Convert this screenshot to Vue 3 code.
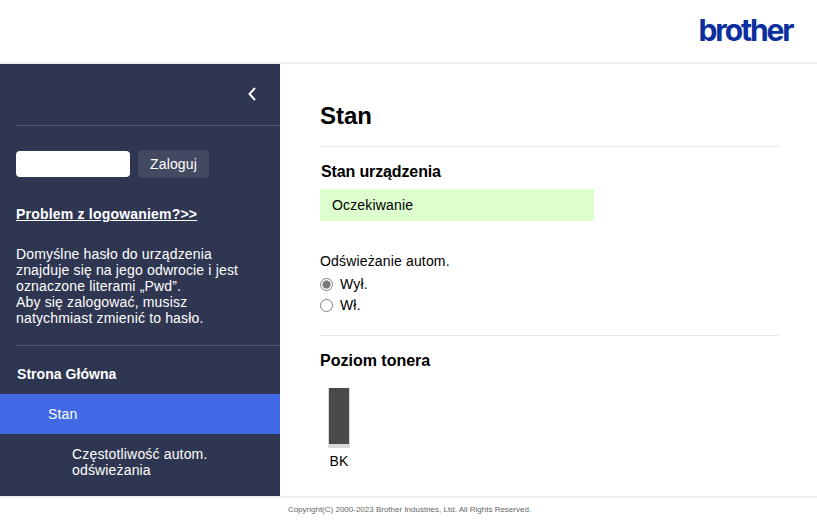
<script setup>
const help = [
  'Domyślne hasło do urządzenia',
  'znajduje się na jego odwrocie i jest',
  'oznaczone literami „Pwd”.',
  'Aby się zalogować, musisz',
  'natychmiast zmienić to hasło.'
]
</script>

<template>
  <div class="page">
    <header class="top">
      <svg class="logo" width="97" height="26" viewBox="0 0 97 26" role="img" aria-label="brother">
        <text x="0.5" y="24" textLength="96" lengthAdjust="spacing">brother</text>
      </svg>
    </header>
    <div class="middle">
      <aside class="side">
        <div class="collapse">
          <svg width="10" height="16" viewBox="0 0 10 16">
            <path d="M8 2 L2.5 8 L8 14" fill="none" stroke="#fff" stroke-width="2" />
          </svg>
        </div>
        <div class="login">
          <input class="pw" type="password" />
          <button class="btn" type="button">Zaloguj</button>
        </div>
        <a class="problem">Problem z logowaniem?&gt;&gt;</a>
        <p class="help"><span v-for="l in help" :key="l">{{ l }}<br /></span></p>
        <nav class="nav">
          <div class="nav-home">Strona Główna</div>
          <div class="nav-active">Stan</div>
          <div class="nav-sub">Częstotliwość autom.<br />odświeżania</div>
        </nav>
      </aside>
      <main class="main">
        <h1 class="title">Stan</h1>
        <h2 class="h-device">Stan urządzenia</h2>
        <div class="status">Oczekiwanie</div>
        <div class="refresh">Odświeżanie autom.</div>
        <label class="radio"><input type="radio" name="r" checked /><span>Wył.</span></label>
        <label class="radio"><input type="radio" name="r" /><span>Wł.</span></label>
        <h2 class="h-toner">Poziom tonera</h2>
        <div class="toner">
          <div class="bar"><div class="fill"></div></div>
          <div class="bk">BK</div>
        </div>
      </main>
    </div>
    <footer class="foot">Copyright(C) 2000-2023 Brother Industries, Ltd. All Rights Reserved.</footer>
  </div>
</template>

<style>
html, body { margin: 0; padding: 0; background: #fff; overflow: hidden; }
</style>

<style scoped>
.page {
  width: 817px;
  height: 521px;
  display: flex;
  flex-direction: column;
  font-family: "Liberation Sans", Arial, sans-serif;
  font-size: 14px;
  letter-spacing: 0.16px;
  color: #000;
  overflow: hidden;
}
.top {
  flex: none;
  border-bottom: 2px solid #eee;
  display: flex;
  justify-content: flex-end;
  align-items: flex-start;
  padding: 17px 22px 0 0;
  height: 45px;
}
.logo { overflow: visible; }
.logo text {
  font-family: Inter, "Liberation Sans", sans-serif;
  font-weight: 700;
  font-size: 30px;
  letter-spacing: 0;
  fill: #0b2f9f;
}
.middle { flex: 1; min-height: 0; display: flex; }
.side {
  width: 280px;
  flex: none;
  background: #2f3651;
  color: #fff;
  overflow: hidden;
}
.collapse {
  height: 62px;
  margin-left: 16px;
  border-bottom: 1px solid #4f5569;
  display: flex;
  align-items: flex-start;
  justify-content: flex-end;
  padding: 22px 23px 0 0;
  box-sizing: border-box;
}
.login {
  display: flex;
  align-items: center;
  gap: 8px;
  padding: 24px 0 0 16px;
}
.pw {
  width: 114px;
  height: 26px;
  box-sizing: border-box;
  border: 0;
  border-radius: 4px;
  background: #fff;
  padding: 0;
}
.btn {
  width: 71px;
  height: 28px;
  border: 0;
  border-radius: 4px;
  background: #434961;
  color: #fff;
  font: 14px "Liberation Sans", Arial, sans-serif;
  letter-spacing: 0.16px;
  padding: 0;
}
.problem {
  display: block;
  margin: 28px 0 0 16px;
  font-weight: 700;
  font-size: 14px;
  line-height: 16px;
  letter-spacing: 0.2px;
  color: #fff;
  text-decoration: underline;
}
.help {
  margin: 24px 0 0 16px;
  font-size: 14px;
  line-height: 16px;
  padding-bottom: 19px;
}
.nav-home {
  margin-left: 16px;
  border-top: 1px solid #4f5569;
  padding: 20px 0 0 1px;
  height: 28px;
  line-height: 16px;
  font-weight: 700;
  letter-spacing: 0.05px;
}
.nav-active {
  height: 40px;
  line-height: 40px;
  background: #4169e6;
  padding-left: 48px;
}
.nav-sub {
  padding: 12px 0 0 72px;
  line-height: 16px;
}
.main {
  flex: 1;
  min-width: 0;
  padding: 0 38px 0 40px;
  overflow: hidden;
}
.title {
  margin: 0;
  height: 83px;
  box-sizing: border-box;
  padding-top: 37px;
  font-size: 24px;
  line-height: 30px;
  font-weight: 700;
  letter-spacing: 0;
  border-bottom: 1px solid #e8e8e8;
}
.h-device {
  margin: 0;
  padding: 16px 0 0 1px;
  font-size: 16px;
  line-height: 18px;
  font-weight: 700;
  letter-spacing: -0.13px;
}
.status {
  margin-top: 8px;
  width: 274px;
  height: 32px;
  line-height: 32px;
  box-sizing: border-box;
  padding-left: 12px;
  background: #dcffcd;
}
.refresh { margin-top: 31px; line-height: 18px; }
.radio {
  display: flex;
  align-items: center;
  height: 21px;
  line-height: 21px;
}
.radio:first-of-type { margin-top: 4px; }
.radio input {
  appearance: none;
  width: 13px;
  height: 13px;
  margin: 0 7px 0 0;
  box-sizing: border-box;
  border: 1px solid #808080;
  border-radius: 50%;
  background: #fff;
}
.radio input:checked {
  background: radial-gradient(circle, #7a7a7a 0 3.8px, #fff 4.4px);
}
.h-toner {
  margin: 19px 0 0;
  padding-top: 16px;
  border-top: 1px solid #e8e8e8;
  font-size: 16px;
  line-height: 18px;
  font-weight: 700;
  letter-spacing: 0;
}
.toner { margin: 18px 0 0 8px; width: 22px; }
.bar {
  width: 22px;
  height: 60px;
  background: #d9d9d9;
  padding: 0 1px;
  box-sizing: border-box;
}
.fill { height: 56px; background: #4a4a4a; }
.bk { margin-top: 5px; text-align: center; line-height: 16px; }
.foot {
  height: 23px;
  flex: none;
  border-top: 2px solid #eee;
  padding-left: 2px;
  text-align: center;
  font-size: 8px;
  letter-spacing: 0;
  line-height: 23px;
  color: #666;
}
</style>
